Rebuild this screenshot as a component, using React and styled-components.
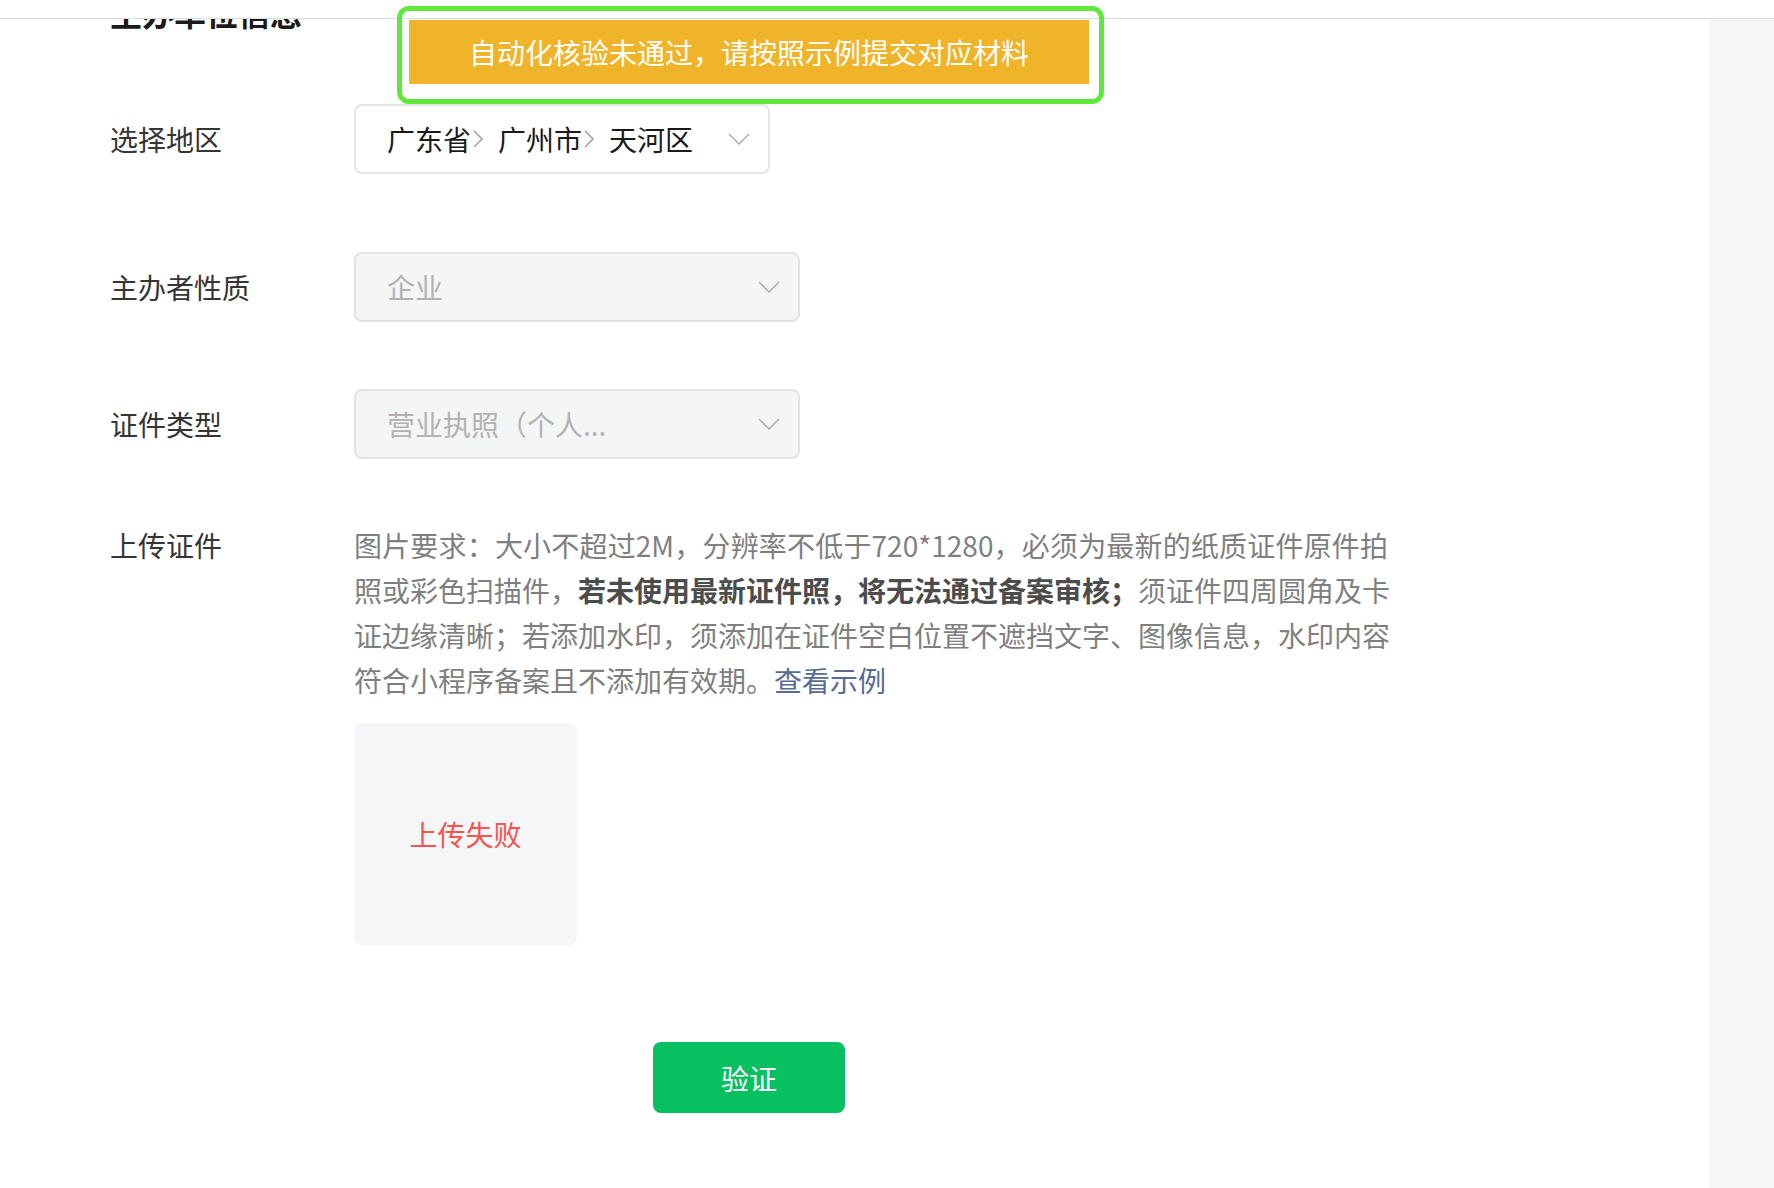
import React from "react";
import styled, { createGlobalStyle } from "styled-components";

const GlobalStyle = createGlobalStyle`
  html, body {
    margin: 0;
    padding: 0;
    background: #fff;
  }
  body {
    font-family: "Noto Sans CJK SC", "Noto Sans", sans-serif;
  }
`;

const Page = styled.div`
  position: relative;
  height: 1188px;
  display: flex;
  flex-direction: column;
  overflow: hidden;
`;

const TopBar = styled.header`
  flex-shrink: 0;
  height: 18px;
  background: #fff;
  border-bottom: 1px solid #dcdcdc;
`;

const Body = styled.div`
  display: flex;
  flex: 1;
  min-height: 0;
`;

const Main = styled.main`
  flex: 1;
  overflow: hidden;
  padding-left: 110px;
`;

const Side = styled.aside`
  width: 65px;
  background: #f5f6f7;
`;

const Heading = styled.h2`
  margin: -23px 0 0;
  font-size: 32px;
  line-height: 32px;
  font-weight: 600;
  color: #1a1a1a;
`;

const Row = styled.div`
  display: grid;
  grid-template-columns: 244px auto;
  align-items: ${(p) => (p.$top ? "start" : "center")};
  margin-top: ${(p) => p.$gap}px;
`;

const Label = styled.div`
  font-size: 28px;
  line-height: 45px;
  color: #353535;
`;

const Select = styled.div`
  box-sizing: border-box;
  width: ${(p) => p.$width}px;
  height: 70px;
  display: flex;
  align-items: center;
  justify-content: space-between;
  padding: 0 18px 0 31px;
  border: 2px solid ${(p) => (p.$disabled ? "#e2e3e3" : "#e5e5e5")};
  border-radius: 8px;
  background: ${(p) => (p.$disabled ? "#f4f5f5" : "#fff")};
  font-size: 28px;
  color: ${(p) => (p.$disabled ? "#b2b2b2" : "#1a1a1a")};
`;

const Value = styled.span`
  display: flex;
  align-items: center;
  white-space: nowrap;
`;

const Sep = styled.svg`
  margin: 0 15px 0 2px;
`;

const Content = styled.div`
  display: flex;
  flex-direction: column;
  align-items: flex-start;
`;

const Para = styled.div`
  width: 1034px;
  font-size: 28px;
  line-height: 45px;
  color: #7f7f7f;
`;

const Line = styled.span`
  display: block;
  white-space: nowrap;
  text-align: ${(p) => (p.$justify ? "justify" : "left")};
  text-align-last: ${(p) => (p.$justify ? "justify" : "auto")};
`;

const Strong = styled.b`
  font-weight: 700;
  color: #4c4c4c;
`;

const Link = styled.a`
  color: #576b95;
  text-decoration: none;
`;

const UploadBox = styled.div`
  margin-top: 20px;
  width: 223px;
  height: 222px;
  border-radius: 8px;
  background: #f5f6f7;
  display: flex;
  align-items: center;
  justify-content: center;
  font-size: 28px;
  color: #fa5151;
`;

const Actions = styled.div`
  margin-top: 97px;
  padding-left: 543px;
`;

const Button = styled.button`
  width: 192px;
  height: 71px;
  border: none;
  border-radius: 8px;
  background: #07c160;
  color: #fff;
  font-family: inherit;
  font-size: 28px;
  padding: 0;
`;

const Highlight = styled.div`
  position: absolute;
  left: 397px;
  top: 6px;
  box-sizing: border-box;
  width: 707px;
  height: 98px;
  border: 5px solid #5fe93a;
  border-radius: 12px;
  z-index: 10;
`;

const Toast = styled.div`
  margin: 9px 10px 15px 7px;
  height: 64px;
  background: #f0b42a;
  color: #fff;
  font-size: 28px;
  display: flex;
  align-items: center;
  justify-content: center;
`;

function Chevron() {
  return (
    <svg width="22" height="12" viewBox="0 0 22 12">
      <polyline points="1,1 11,11 21,1" fill="none" stroke="#b2b2b2" strokeWidth="1.6" />
    </svg>
  );
}

function Arrow() {
  return (
    <Sep width="10" height="18" viewBox="0 0 10 18">
      <polyline points="1,1 9,9 1,17" fill="none" stroke="#a6a6a6" strokeWidth="1.6" />
    </Sep>
  );
}

export default function App() {
  return (
    <Page>
      <GlobalStyle />
      <TopBar />
      <Body>
        <Main>
          <Heading>主办单位信息</Heading>

          <Row $gap={76}>
            <Label>选择地区</Label>
            <Select $width={416}>
              <Value>
                广东省<Arrow />广州市<Arrow />天河区
              </Value>
              <Chevron />
            </Select>
          </Row>

          <Row $gap={78}>
            <Label>主办者性质</Label>
            <Select $width={446} $disabled>
              <Value>企业</Value>
              <Chevron />
            </Select>
          </Row>

          <Row $gap={67}>
            <Label>证件类型</Label>
            <Select $width={446} $disabled>
              <Value>营业执照（个人...</Value>
              <Chevron />
            </Select>
          </Row>

          <Row $gap={64} $top>
            <Label>上传证件</Label>
            <Content>
              <Para>
                <Line $justify>
                  图片要求：大小不超过2M，分辨率不低于720*1280，必须为最新的纸质证件原件拍
                </Line>
                <Line $justify>
                  照或彩色扫描件，<Strong>若未使用最新证件照，将无法通过备案审核；</Strong>
                  须证件四周圆角及卡
                </Line>
                <Line $justify>
                  证边缘清晰；若添加水印，须添加在证件空白位置不遮挡文字、图像信息，水印内容
                </Line>
                <Line>
                  符合小程序备案且不添加有效期。<Link href="#">查看示例</Link>
                </Line>
              </Para>
              <UploadBox>上传失败</UploadBox>
            </Content>
          </Row>

          <Actions>
            <Button>验证</Button>
          </Actions>
        </Main>
        <Side />
      </Body>

      <Highlight>
        <Toast>自动化核验未通过，请按照示例提交对应材料</Toast>
      </Highlight>
    </Page>
  );
}
